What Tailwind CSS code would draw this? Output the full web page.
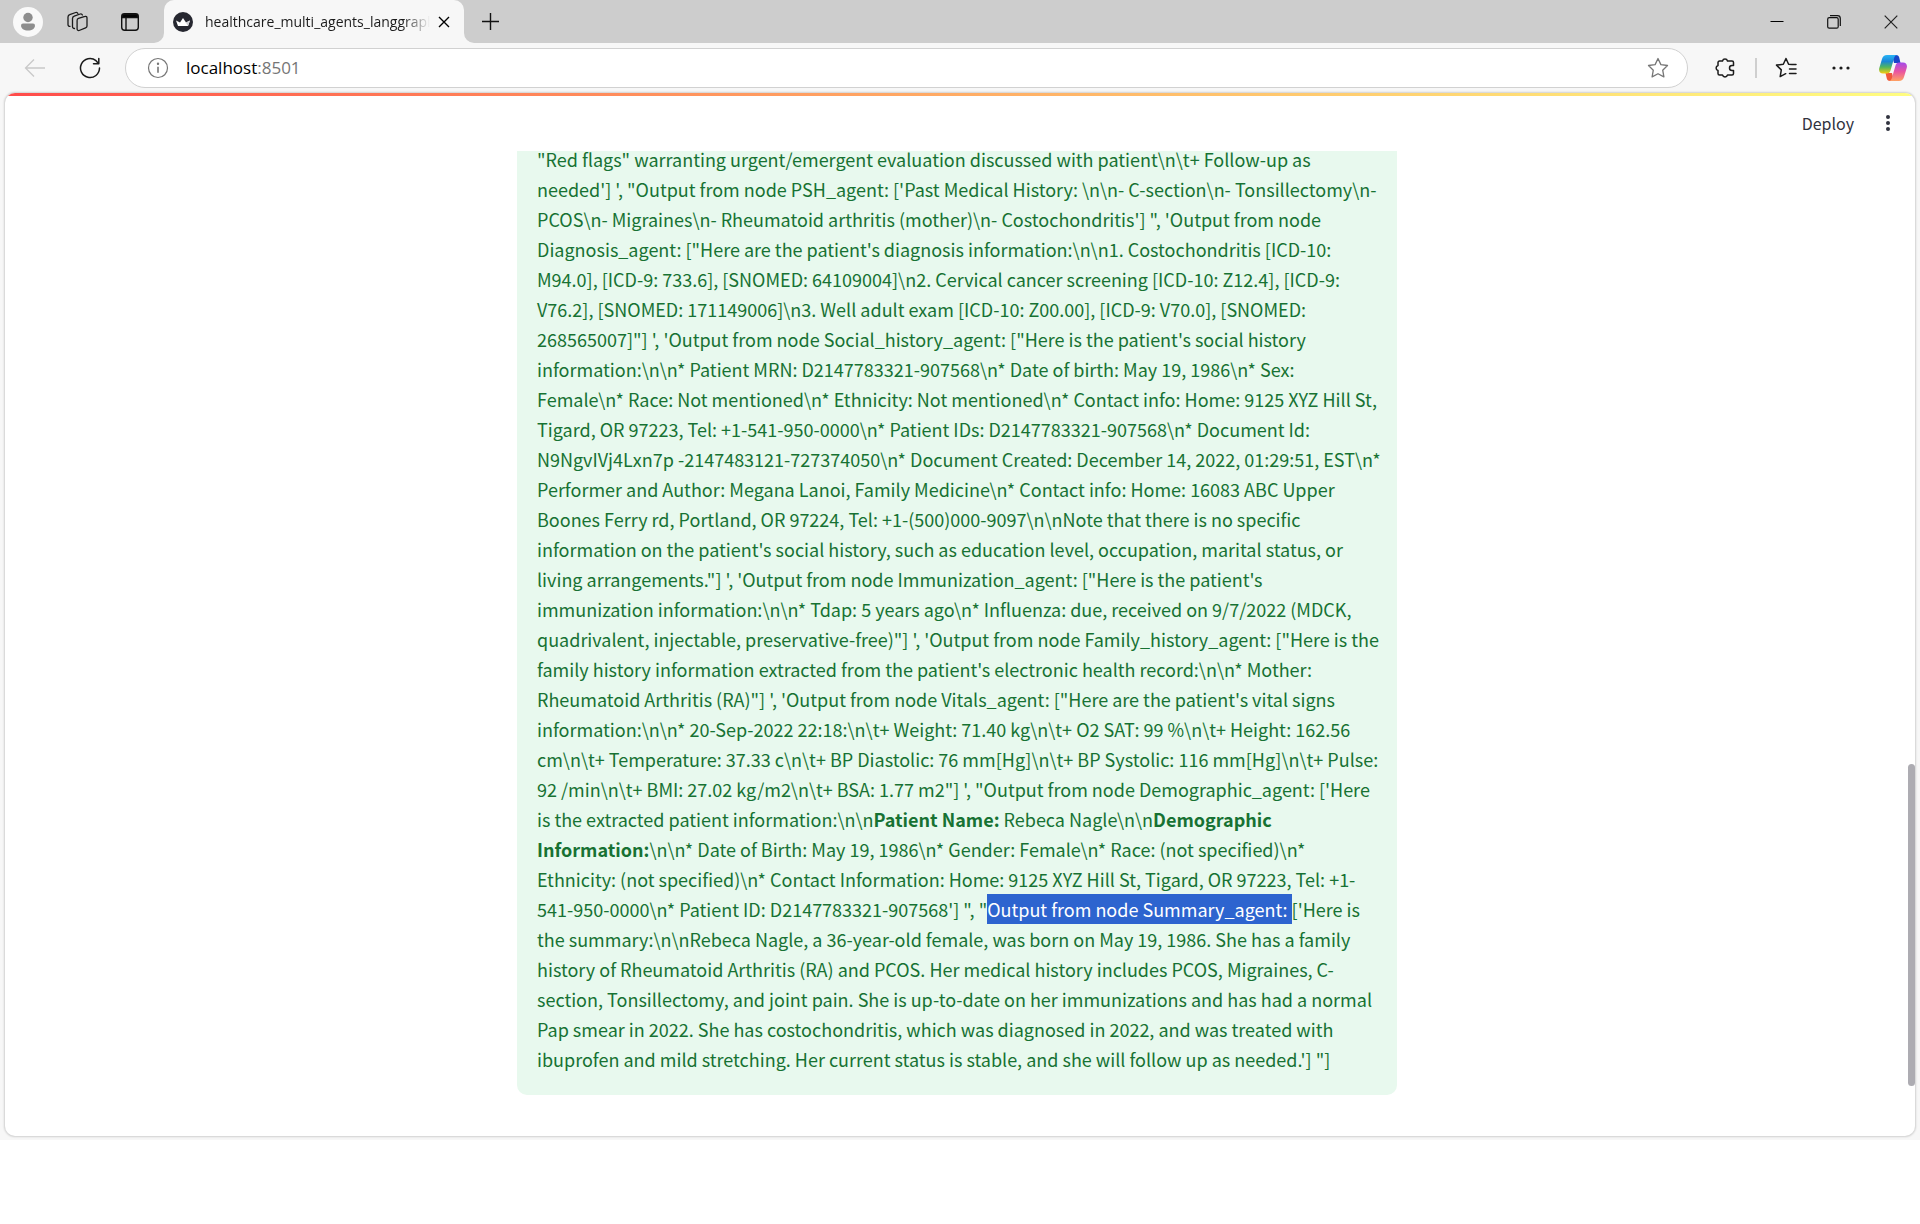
<!DOCTYPE html>
<html lang="en">
<head>
<meta charset="utf-8">
<title>healthcare_multi_agents_langgraph</title>
<script src="https://cdn.jsdelivr.net/npm/@tailwindcss/browser@4"></script>
</head>
<body class="bg-white font-['Open_Sans',sans-serif]">
<div class="bg-[#f7f7f7]">
  <header class="flex h-[43px] items-center bg-[#cdcdcd] text-black">
    <button aria-label="Profile" class="ml-[13px] flex size-[30px] items-center justify-center rounded-full bg-[#f9f9f9]">
      <svg class="size-[30px]" viewBox="0 0 30 30" fill="#8e8e8e"><circle cx="15" cy="10.500" r="4.700"/><path d="M10 16.500h10a2 2 0 0 1 2 2c0 3-3 5-7 5s-7-2-7-5a2 2 0 0 1 2-2z"/></svg>
    </button>
    <button aria-label="Workspaces" class="ml-[22px]">
      <svg class="size-[24px]" viewBox="0 0 24 24" fill="none" stroke="#1b1b1b" stroke-width="1.3" stroke-linejoin="round" stroke-linecap="round"><path d="M13.500 8.400l6.500-2a1.500 1.500 0 0 1 2 1.500v8a2 2 0 0 1-1.400 1.900l-6.500 2.700a1.500 1.500 0 0 1-2-1.400v-8.700a2 2 0 0 1 1.400-2z"/><path d="M9.500 18.500a1.800 1.800 0 0 1-2-1.700V8.500a2.500 2.500 0 0 1 1.700-2.300l6-2.200a1.800 1.800 0 0 1 2.200 1"/><path d="M5 16.300a1.800 1.800 0 0 1-2-1.700V7a2.500 2.500 0 0 1 1.700-2.300l6-2.200a1.800 1.800 0 0 1 2.200 1"/></svg>
    </button>
    <button aria-label="Tab actions" class="ml-[31px]">
      <svg class="size-[20px]" viewBox="0 0 20 20" fill="none" stroke="#111" stroke-width="1.400"><rect x="1.700" y="1.700" width="16.600" height="16.600" rx="3"/><path d="M2.500 2.500h15V5.500h-15z" fill="#000"/><path d="M6 6v12"/></svg>
    </button>
    <div class="ml-[8px] flex h-full items-end">
      <svg class="size-4" viewBox="0 0 16 16" fill="#f7f7f7"><path d="M16 0v16H6A10 10 0 0 0 16 6z"/></svg>
      <div class="flex h-full w-[300px] items-center rounded-t-[10px] bg-[#f7f7f7] pl-[9px]">
        <svg class="size-[20px] shrink-0" viewBox="0 0 20 20"><circle cx="10" cy="10" r="10" fill="#262730"/><path d="M3 8.500l4 2L10 6l3 4.500 4-2-2 5.500H5z" fill="#fff"/><path d="M10 6l3 4.500 4-2-2 5.500z" fill="#cfcfd4"/></svg>
        <span class="ml-[12px] w-[225px] overflow-hidden whitespace-nowrap bg-linear-to-r from-[#1b1b1b] from-88% to-transparent bg-clip-text text-sm text-transparent">healthcare_multi_agents_langgraph</span>
        <button aria-label="Close tab" class="ml-[8px]"><svg class="size-[12px]" viewBox="0 0 12 12" stroke="#000" stroke-width="1.400"><path d="M1 1l10 10M11 1L1 11"/></svg></button>
      </div>
      <svg class="size-4" viewBox="0 0 16 16" fill="#f7f7f7"><path d="M0 0v16h10A10 10 0 0 1 0 6z"/></svg>
    </div>
    <button aria-label="New tab"><svg class="size-[20px]" viewBox="0 0 20 20" stroke="#111" stroke-width="1.400"><path d="M10.500 1v17M2 9.500h17"/></svg></button>
    <div class="ml-auto flex items-center gap-[43px] pr-[22px]">
      <button aria-label="Minimize"><svg class="size-[14px]" viewBox="0 0 14 14" stroke="#000"><path d="M.5 6.500h13"/></svg></button>
      <button aria-label="Restore"><svg class="size-[14px]" viewBox="0 0 14 14" fill="none" stroke="#111" stroke-width="1.200"><rect x=".7" y="2.700" width="10.500" height="10.500" rx="1.500"/><path d="M3 .7h7.500a2.800 2.800 0 0 1 2.800 2.800V11"/></svg></button>
      <button aria-label="Close window"><svg class="size-[14px]" viewBox="0 0 14 14" stroke="#222" stroke-width="1.200"><path d="M.7.700l12.600 12.600M13.300.7L.7 13.300"/></svg></button>
    </div>
  </header>

  <nav class="flex h-[50px] items-center">
    <button aria-label="Back" class="ml-[24px]"><svg class="size-[22px]" viewBox="0 0 22 22" fill="none" stroke="#c9c9c9" stroke-width="1.300"><path d="M21 11H2M10 2.500L1.500 11l8.500 8.500"/></svg></button>
    <button aria-label="Refresh" class="ml-[33px]"><svg class="size-[22px]" viewBox="0 0 22 22" fill="none" stroke="#1b1b1b" stroke-width="1.500" stroke-linecap="round" stroke-linejoin="round"><path d="M20.500 11a9.500 9.500 0 1 1-3.500-7.300l2.500 2.800M19.800 1.500v5.200h-5.300"/></svg></button>
    <div class="ml-[24px] flex h-[40px] flex-1 items-center rounded-full border border-[#d1d1d1] bg-white">
      <svg class="ml-[21px] size-[22px]" viewBox="0 0 22 22" fill="none" stroke="#767676" stroke-width="1.200"><circle cx="11" cy="11" r="9.500"/><path d="M11 9.800v6" stroke-width="1.600"/><circle cx="11" cy="6.800" r=".6" fill="#767676"/></svg>
      <a href="http://localhost:8501" class="ml-[17px] text-[17px] text-black">localhost<span class="text-[#767676]">:8501</span></a>
      <button aria-label="Add to favorites" class="ml-auto mr-[18px]"><svg class="size-[22px]" viewBox="0 0 22 22" fill="none" stroke="#767676" stroke-width="1.300" stroke-linejoin="round"><path d="M11 1.500l2.900 6.100 6.600.9-4.800 4.700 1.200 6.700-5.900-3.200-5.900 3.200 1.200-6.700L1.500 8.500l6.600-.9z"/></svg></button>
    </div>
    <button aria-label="Extensions" class="ml-[26px]"><svg class="size-[22px]" viewBox="0 0 22 22" fill="none" stroke="#1b1b1b" stroke-width="1.500" stroke-linejoin="round"><path d="M5.500 4H8.500a2.600 2.600 0 0 1 5 0H18a1.500 1.500 0 0 1 1.500 1.500V8.500H18a2.400 2.400 0 0 0 0 5h1.500V16.500A1.500 1.500 0 0 1 18 18h-4.500a2.600 2.600 0 0 1-5 0H5.500A1.500 1.500 0 0 1 4 16.500V13.500a2.600 2.600 0 0 1 0-5V5.500A1.500 1.500 0 0 1 5.500 4z"/></svg></button>
    <span class="ml-[19px] h-[20px] w-[2px] bg-[#cfcfcf]"></span>
    <button aria-label="Favorites" class="ml-[18px]"><svg class="size-[22px]" viewBox="0 0 22 22" fill="none" stroke="#1b1b1b" stroke-width="1.500" stroke-linejoin="round" stroke-linecap="round"><path d="M17 7.600l-3.400-.4L11 1.500 8.300 7.200l-6.800.9 4.800 4.800-1.100 6.700 5.500-2.900M14.500 7.500H21M14.500 12H21M14.500 16.500H21"/></svg></button>
    <button aria-label="Settings and more" class="ml-[33px]"><svg class="size-[22px]" viewBox="0 0 22 22" fill="#1b1b1b"><circle cx="4" cy="11" r="1.600"/><circle cx="11" cy="11" r="1.600"/><circle cx="18" cy="11" r="1.600"/></svg></button>
    <button aria-label="Copilot" class="ml-[27px] mr-[13px]">
      <svg class="h-[26px] w-[28px]" viewBox="0 0 28 26"><defs>
        <linearGradient id="ribbon-cool" x1="0" y1="0" x2="0" y2="1"><stop offset="0" stop-color="#28b4f5"/><stop offset=".35" stop-color="#1a86d8"/><stop offset=".65" stop-color="#4fb560"/><stop offset="1" stop-color="#f5cc10"/></linearGradient>
        <linearGradient id="ribbon-warm" x1="0" y1="0" x2="0" y2="1"><stop offset="0" stop-color="#a44bea"/><stop offset=".5" stop-color="#ea55a0"/><stop offset="1" stop-color="#ffa262"/></linearGradient></defs>
        <path d="M13 0h4c2 0 2.800 1 3.200 2.500L21.500 8H15z" fill="#1846c8"/><path d="M15 26h-4c-2 0-2.800-1-3.200-2.500L6.500 18H13z" fill="#f0583a"/>
        <path d="M8 0h10.500c-2 0-2.800 1.200-3.300 2.800L11.500 15.500C11 17.500 9.700 18.500 8 18.500H4C1 18.500-.6 16.200.3 13L3 4C3.800 1.300 5.300 0 8 0z" fill="url(#ribbon-cool)"/>
        <path d="M20 26H9.500c2 0 2.800-1.200 3.300-2.800L16.500 10.500C17 8.500 18.300 7.500 20 7.500h4c3 0 4.600 2.300 3.700 5.500L25 22C24.200 24.700 22.700 26 20 26z" fill="url(#ribbon-warm)"/></svg>
    </button>
  </nav>

  <div class="px-[5px] pb-1">
    <main class="relative overflow-hidden rounded-[10px] bg-white shadow-[0_0_2px_1px_rgba(0,0,0,0.16)]">
      <div class="h-[3px] bg-linear-to-r from-[#ff4b4b] to-[#fffd80]"></div>
      <div class="mb-[2px] flex h-[53px] items-center justify-end gap-[26px] pr-[19px] font-['Noto_Sans_CJK_SC',sans-serif] text-[#31333f]">
        <button class="text-[16px] leading-6">Deploy</button>
        <button aria-label="Main menu"><svg class="size-[16px]" viewBox="0 0 16 16" fill="#31333f"><circle cx="8" cy="2" r="2"/><circle cx="8" cy="8" r="2"/><circle cx="8" cy="14" r="2"/></svg></button>
      </div>
      <section class="mr-[6px] pb-[41px]">
        <div class="mx-auto w-[880px] overflow-hidden rounded-b-[10px] bg-[#e8f9ee] px-5 pb-[21px]">
          <p class="-mt-[7px] whitespace-nowrap font-['Noto_Sans_CJK_SC',sans-serif] text-[18px] leading-[30px] text-[#177233]">"Red flags" warranting urgent/emergent evaluation discussed with patient\n\t+ Follow-up as<br>
needed'] ', "Output from node PSH_agent: ['Past Medical History: \n\n- C-section\n- Tonsillectomy\n-<br>
PCOS\n- Migraines\n- Rheumatoid arthritis (mother)\n- Costochondritis'] ", 'Output from node<br>
Diagnosis_agent: ["Here are the patient's diagnosis information:\n\n1. Costochondritis [ICD-10:<br>
M94.0], [ICD-9: 733.6], [SNOMED: 64109004]\n2. Cervical cancer screening [ICD-10: Z12.4], [ICD-9:<br>
V76.2], [SNOMED: 171149006]\n3. Well adult exam [ICD-10: Z00.00], [ICD-9: V70.0], [SNOMED:<br>
268565007]"] ', 'Output from node Social_history_agent: ["Here is the patient's social history<br>
information:\n\n* Patient MRN: D2147783321-907568\n* Date of birth: May 19, 1986\n* Sex:<br>
Female\n* Race: Not mentioned\n* Ethnicity: Not mentioned\n* Contact info: Home: 9125 XYZ Hill St,<br>
Tigard, OR 97223, Tel: +1-541-950-0000\n* Patient IDs: D2147783321-907568\n* Document Id:<br>
N9NgvIVj4Lxn7p -2147483121-727374050\n* Document Created: December 14, 2022, 01:29:51, EST\n*<br>
Performer and Author: Megana Lanoi, Family Medicine\n* Contact info: Home: 16083 ABC Upper<br>
Boones Ferry rd, Portland, OR 97224, Tel: +1-(500)000-9097\n\nNote that there is no specific<br>
information on the patient's social history, such as education level, occupation, marital status, or<br>
living arrangements."] ', 'Output from node Immunization_agent: ["Here is the patient's<br>
immunization information:\n\n* Tdap: 5 years ago\n* Influenza: due, received on 9/7/2022 (MDCK,<br>
quadrivalent, injectable, preservative-free)"] ', 'Output from node Family_history_agent: ["Here is the<br>
family history information extracted from the patient's electronic health record:\n\n* Mother:<br>
Rheumatoid Arthritis (RA)"] ', 'Output from node Vitals_agent: ["Here are the patient's vital signs<br>
information:\n\n* 20-Sep-2022 22:18:\n\t+ Weight: 71.40 kg\n\t+ O2 SAT: 99 %\n\t+ Height: 162.56<br>
cm\n\t+ Temperature: 37.33 c\n\t+ BP Diastolic: 76 mm[Hg]\n\t+ BP Systolic: 116 mm[Hg]\n\t+ Pulse:<br>
92 /min\n\t+ BMI: 27.02 kg/m2\n\t+ BSA: 1.77 m2"] ', "Output from node Demographic_agent: ['Here<br>
is the extracted patient information:\n\n<strong class="font-semibold">Patient Name:</strong> Rebeca Nagle\n\n<strong class="font-semibold">Demographic<br>
Information:</strong>\n\n* Date of Birth: May 19, 1986\n* Gender: Female\n* Race: (not specified)\n*<br>
Ethnicity: (not specified)\n* Contact Information: Home: 9125 XYZ Hill St, Tigard, OR 97223, Tel: +1-<br>
541-950-0000\n* Patient ID: D2147783321-907568'] ", "<mark class="bg-[#2d64cf] py-[2px] text-white">Output from node Summary_agent: </mark>['Here is<br>
the summary:\n\nRebeca Nagle, a 36-year-old female, was born on May 19, 1986. She has a family<br>
history of Rheumatoid Arthritis (RA) and PCOS. Her medical history includes PCOS, Migraines, C-<br>
section, Tonsillectomy, and joint pain. She is up-to-date on her immunizations and has had a normal<br>
Pap smear in 2022. She has costochondritis, which was diagnosed in 2022, and was treated with<br>
ibuprofen and mild stretching. Her current status is stable, and she will follow up as needed.'] "]</p>
        </div>
      </section>
      <div class="absolute right-0 bottom-[50px] h-[322px] w-[7px] rounded-full bg-[#adacb2]"></div>
    </main>
  </div>
</div>
</body>
</html>
